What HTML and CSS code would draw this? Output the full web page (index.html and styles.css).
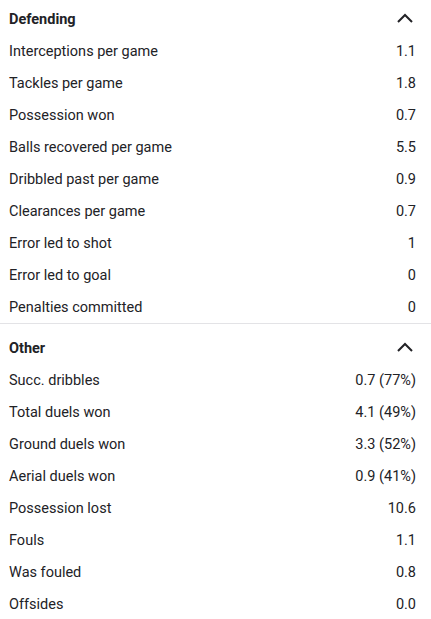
FILE: index.html
```html
<!DOCTYPE html>
<html>
<head>
<meta charset="utf-8">
<link rel="stylesheet" href="styles.css">
</head>
<body>
<section class="group first">
  <div class="head"><span>Defending</span><svg class="chev" viewBox="0 0 16 10" width="16" height="10"><path d="M1 9 L8 2 L15 9" fill="none" stroke="#222226" stroke-width="2"/></svg></div>
  <div class="row"><span>Interceptions per game</span><span>1.1</span></div>
  <div class="row"><span>Tackles per game</span><span>1.8</span></div>
  <div class="row"><span>Possession won</span><span>0.7</span></div>
  <div class="row"><span>Balls recovered per game</span><span>5.5</span></div>
  <div class="row"><span>Dribbled past per game</span><span>0.9</span></div>
  <div class="row"><span>Clearances per game</span><span>0.7</span></div>
  <div class="row"><span>Error led to shot</span><span>1</span></div>
  <div class="row"><span>Error led to goal</span><span>0</span></div>
  <div class="row"><span>Penalties committed</span><span>0</span></div>
</section>
<section class="group second">
  <div class="head"><span>Other</span><svg class="chev" viewBox="0 0 16 10" width="16" height="10"><path d="M1 9 L8 2 L15 9" fill="none" stroke="#222226" stroke-width="2"/></svg></div>
  <div class="row"><span>Succ. dribbles</span><span>0.7 (77%)</span></div>
  <div class="row"><span>Total duels won</span><span>4.1 (49%)</span></div>
  <div class="row"><span>Ground duels won</span><span>3.3 (52%)</span></div>
  <div class="row"><span>Aerial duels won</span><span>0.9 (41%)</span></div>
  <div class="row"><span>Possession lost</span><span>10.6</span></div>
  <div class="row"><span>Fouls</span><span>1.1</span></div>
  <div class="row"><span>Was fouled</span><span>0.8</span></div>
  <div class="row"><span>Offsides</span><span>0.0</span></div>
</section>
</body>
</html>
```
FILE: styles.css
```css
html, body {
  margin: 0;
  padding: 0;
  background: #ffffff;
}
body {
  font-family: Roboto, "Liberation Sans", sans-serif;
  font-size: 14.5px;
  color: #222226;
  width: 431px;
  overflow: hidden;
}
.group {
  display: flex;
  flex-direction: column;
}
.group.first {
  padding-top: 3px;
  border-bottom: 1px solid #e3e3e6;
}
.group.second {
  padding-top: 8px;
}
.head, .row {
  display: flex;
  align-items: center;
  justify-content: space-between;
  height: 32px;
  padding: 0 15px 0 9px;
}
.head {
  font-weight: 700;
  padding-right: 18px;
}
.chev {
  display: block;
  margin-top: -2px;
}
```
